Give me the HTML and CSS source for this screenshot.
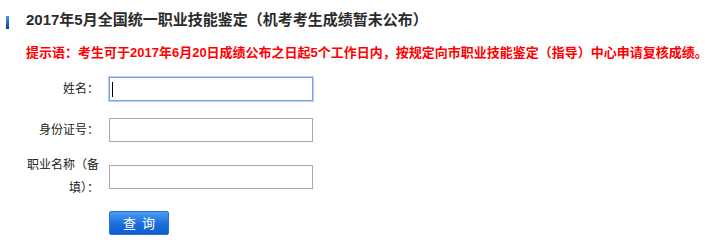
FILE: index.html
```html
<!DOCTYPE html>
<html lang="zh-CN">
<head>
<meta charset="utf-8">
<title>成绩查询</title>
<link rel="stylesheet" href="styles.css">
</head>
<body>
<div class="page">
  <div class="header">
    <span class="bar"></span>
    <h1 class="title">2017年5月全国统一职业技能鉴定（机考考生成绩暂未公布）</h1>
  </div>
  <p class="notice">提示语：考生可于2017年6月20日成绩公布之日起5个工作日内，按规定向市职业技能鉴定（指导）中心申请复核成绩。</p>
  <form class="form">
    <div class="row row-name">
      <label class="label">姓名：</label>
      <span class="field">
        <input class="input input-focus" type="text">
        <span class="caret"></span>
      </span>
    </div>
    <div class="row row-id">
      <label class="label">身份证号：</label>
      <span class="field"><input class="input" type="text"></span>
    </div>
    <div class="row row-job">
      <label class="label">职业名称（备<br>填）：</label>
      <span class="field"><input class="input" type="text"></span>
    </div>
    <div class="row row-btn">
      <span class="label"></span>
      <button class="btn" type="button"><span>查</span><span>询</span></button>
    </div>
  </form>
</div>
</body>
</html>
```

FILE: styles.css
```css
html, body {
  margin: 0;
  padding: 0;
  background: #ffffff;
}

body {
  font-family: "Liberation Sans", "Noto Sans CJK SC", sans-serif;
  color: #333333;
}

.page {
  padding-top: 10px;
}

.header {
  display: flex;
  align-items: center;
  padding-left: 6px;
  height: 20px;
}

.bar {
  display: block;
  width: 3px;
  height: 13px;
  margin-top: 4px;
  background: linear-gradient(#4d93f2, #0a3aa8);
  margin-right: 17px;
}

.title {
  margin: 0;
  font-size: 15px;
  line-height: 20px;
  font-weight: bold;
  color: #2b2b2b;
  white-space: nowrap;
}

.notice {
  width: max-content;
  margin: 12px 0 0 26px;
  font-size: 13px;
  line-height: 21px;
  font-weight: bold;
  color: #ff0000;
  white-space: nowrap;
}

.form {
  margin: 0;
  padding-left: 26px;
}

.row {
  display: flex;
  align-items: center;
}

.row-name {
  margin-top: 14px;
}

.row-id {
  margin-top: 17px;
}

.row-job {
  margin-top: 12px;
}

.row-btn {
  margin-top: 11px;
}

.label {
  display: block;
  width: 73px;
  flex: none;
  font-size: 12px;
  line-height: 23px;
  text-align: right;
  color: #222222;
  margin-right: 10px;
}

.field {
  position: relative;
  display: block;
}

.input {
  display: block;
  box-sizing: border-box;
  width: 204px;
  height: 24px;
  margin: 0;
  padding: 0 3px;
  border: 1px solid #a9a9a9;
  border-radius: 0;
  background: #ffffff;
  outline: none;
  font-size: 12px;
}

.input-focus {
  border-color: #7ba2e6;
  box-shadow: 0 0 0 1px #b9d0f4;
}

.caret {
  position: absolute;
  left: 3px;
  top: 5px;
  width: 1px;
  height: 15px;
  background: #000000;
}

.btn {
  display: flex;
  align-items: center;
  justify-content: center;
  gap: 6px;
  box-sizing: border-box;
  width: 60px;
  height: 24px;
  margin: 0;
  padding: 0;
  border: 1px solid #2273d8;
  border-radius: 2px;
  background: linear-gradient(#4a9cf2, #1a6ddb 55%, #0f5fcc);
  color: #ffffff;
  font-family: "Noto Sans CJK SC", sans-serif;
  font-size: 13px;
  line-height: 22px;
  cursor: pointer;
}
```
